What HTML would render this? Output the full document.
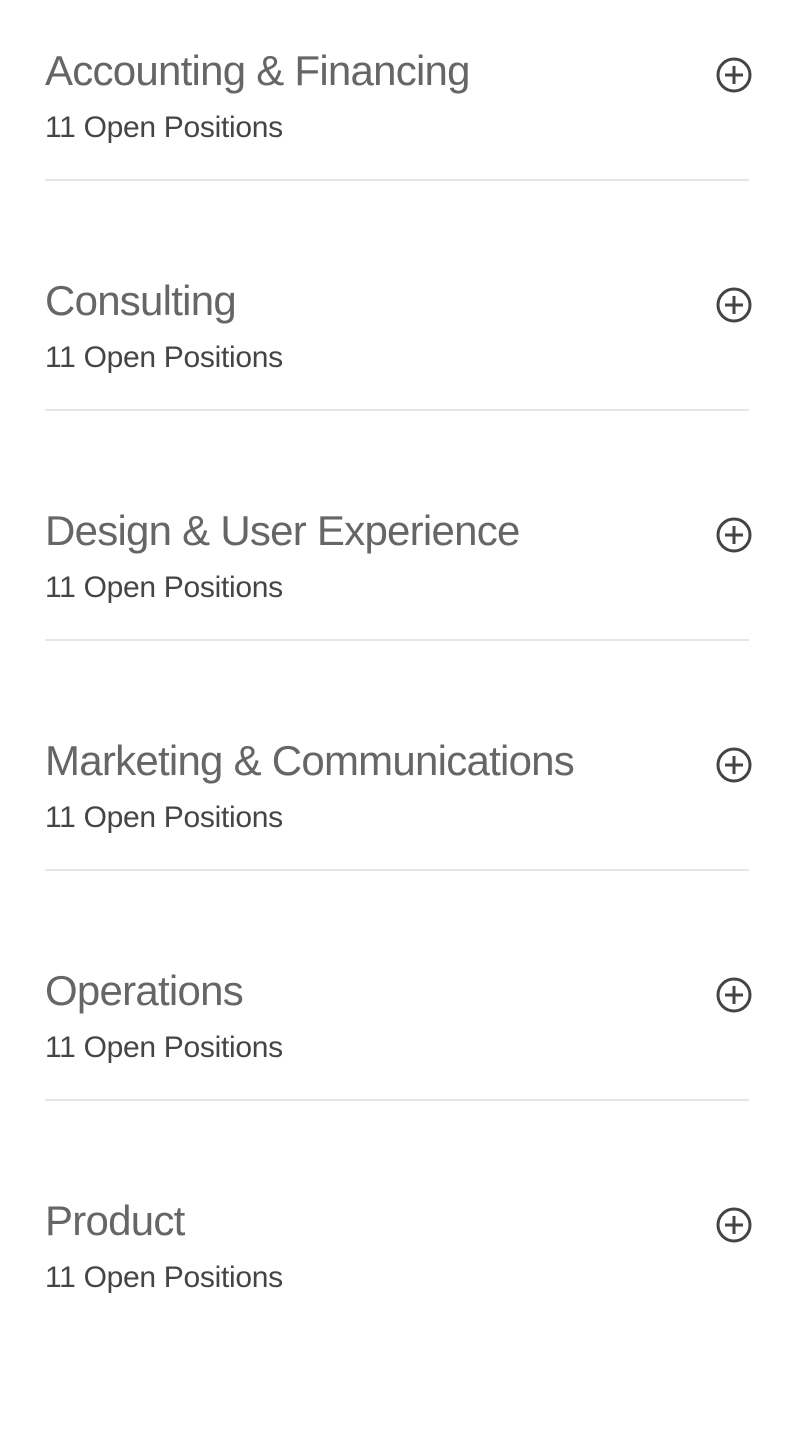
<!DOCTYPE html>
<html><head><meta charset="utf-8"><style>
body{margin:0;background:#fff;width:794px;height:1280px;overflow:hidden;font-family:"Liberation Sans",sans-serif;}
.item{position:absolute;left:45px;width:704px;height:230px;}
.t{position:absolute;left:0;top:-5px;font-size:42px;color:#666;line-height:1;white-space:nowrap;letter-spacing:-0.75px;}
.s{position:absolute;left:0;top:58px;font-size:30px;color:#454545;line-height:1;letter-spacing:-0.3px;}
.l{position:absolute;left:0;top:124px;width:704px;height:2px;background:#e6e6e6;}
svg{position:absolute;left:670px;top:1px;}
</style></head><body>
<div class="item" style="top:55px"><div class="t">Accounting &amp; Financing</div><div class="s">11 Open Positions</div><div class="l"></div><svg width="38" height="38" viewBox="0 0 38 38"><circle cx="19" cy="19" r="16" fill="none" stroke="#444" stroke-width="3"/><path d="M19 10v18M10 19h18" stroke="#444" stroke-width="3"/></svg></div>
<div class="item" style="top:285px"><div class="t">Consulting</div><div class="s">11 Open Positions</div><div class="l"></div><svg width="38" height="38" viewBox="0 0 38 38"><circle cx="19" cy="19" r="16" fill="none" stroke="#444" stroke-width="3"/><path d="M19 10v18M10 19h18" stroke="#444" stroke-width="3"/></svg></div>
<div class="item" style="top:515px"><div class="t">Design &amp; User Experience</div><div class="s">11 Open Positions</div><div class="l"></div><svg width="38" height="38" viewBox="0 0 38 38"><circle cx="19" cy="19" r="16" fill="none" stroke="#444" stroke-width="3"/><path d="M19 10v18M10 19h18" stroke="#444" stroke-width="3"/></svg></div>
<div class="item" style="top:745px"><div class="t">Marketing &amp; Communications</div><div class="s">11 Open Positions</div><div class="l"></div><svg width="38" height="38" viewBox="0 0 38 38"><circle cx="19" cy="19" r="16" fill="none" stroke="#444" stroke-width="3"/><path d="M19 10v18M10 19h18" stroke="#444" stroke-width="3"/></svg></div>
<div class="item" style="top:975px"><div class="t">Operations</div><div class="s">11 Open Positions</div><div class="l"></div><svg width="38" height="38" viewBox="0 0 38 38"><circle cx="19" cy="19" r="16" fill="none" stroke="#444" stroke-width="3"/><path d="M19 10v18M10 19h18" stroke="#444" stroke-width="3"/></svg></div>
<div class="item" style="top:1205px"><div class="t">Product</div><div class="s">11 Open Positions</div><svg width="38" height="38" viewBox="0 0 38 38"><circle cx="19" cy="19" r="16" fill="none" stroke="#444" stroke-width="3"/><path d="M19 10v18M10 19h18" stroke="#444" stroke-width="3"/></svg></div>
</body></html>
